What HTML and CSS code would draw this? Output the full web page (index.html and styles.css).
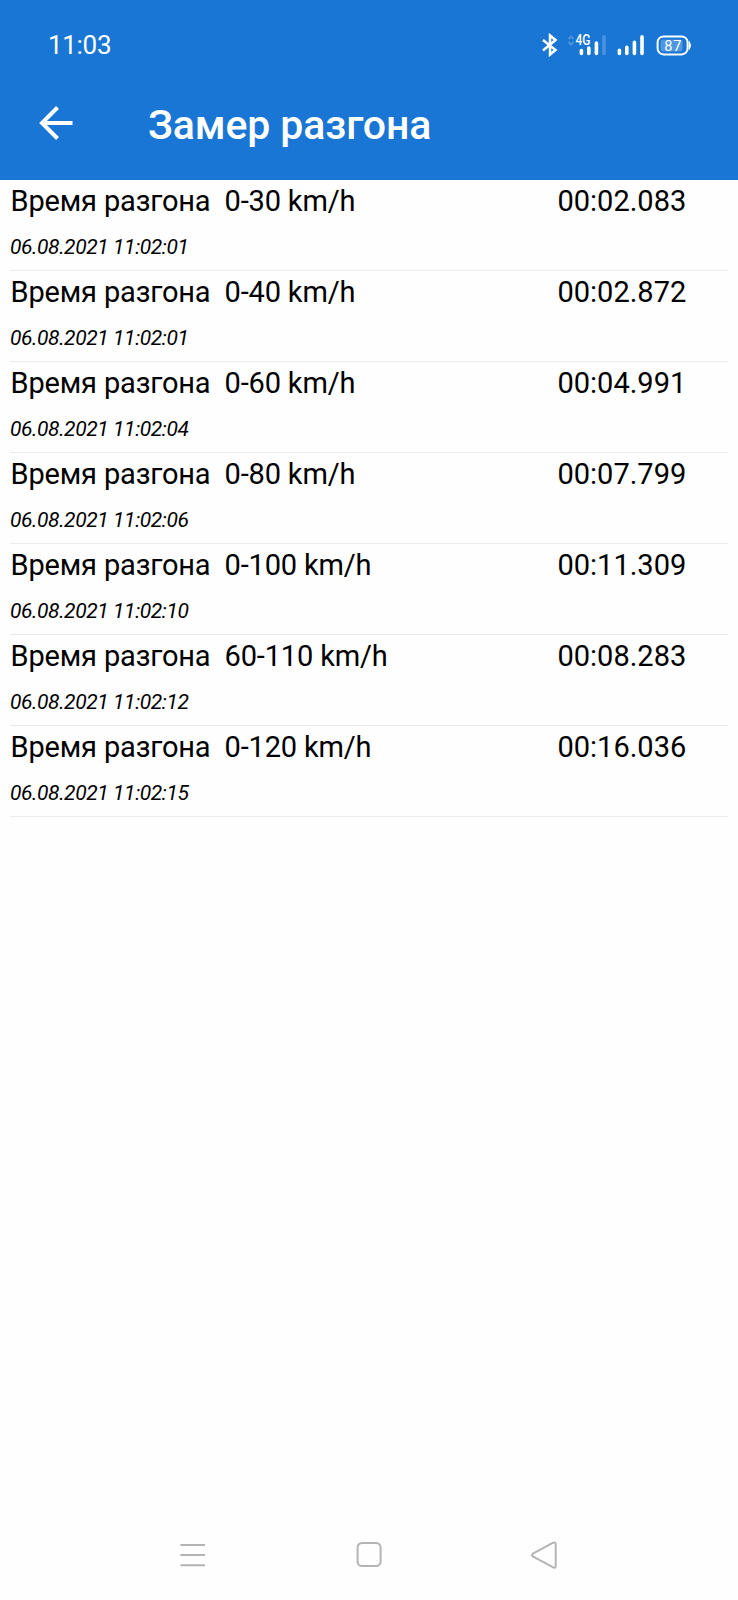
FILE: index.html
```html
<!DOCTYPE html>
<html lang="ru">
  <head>
    <meta charset="UTF-8" />
    <meta name="viewport" content="width=device-width, initial-scale=1.0" />
    <title>Замер разгона</title>
    <link rel="stylesheet" href="styles.css">
  </head>
  <body>
    <header class="header">
      <div class="status">
        <span class="clock">11:03</span>
        <svg class="status-icons" width="160" height="30" viewBox="0 0 160 30">
          <!-- bluetooth -->
          <path d="M3 10 L15.5 20 L10 24.5 V5.5 L15.5 10 L3 20.5" fill="none" stroke="#fff" stroke-width="2.5" />
          <!-- mobile data -->
          <path d="M28.5 9 L31 6.5 L33.5 9 M28.5 12 L31 14.5 L33.5 12" fill="none" stroke="#4a92dd" stroke-width="2" />
          <text class="net" x="35.5" y="14.5" textLength="15" lengthAdjust="spacingAndGlyphs">4G</text>
          <g stroke="#fff" stroke-width="3.6" stroke-linecap="round">
            <path d="M41.4 20.6 V23.4 M48.8 18 V23.4 M56.4 13 V23.4" />
            <path d="M64 6.8 V23.4" stroke="#4a92dd" />
            <path d="M79.4 20.4 V23.4 M86.8 17.4 V23.4 M94.4 12.4 V23.4 M102 6.8 V23.4" />
          </g>
          <!-- battery -->
          <rect x="120.5" y="9.5" width="22" height="12" rx="3" fill="#4f97e0" />
          <rect x="117.6" y="6.4" width="30" height="18" rx="6" fill="none" stroke="#fff" stroke-width="2" />
          <path d="M149.2 11.5 Q152 15.3 149.2 19.5 Z" fill="#fff" stroke="#fff" />
          <text class="charge" x="124.3" y="20.6" textLength="17">87</text>
        </svg>
      </div>
      <div class="toolbar">
        <svg class="back" width="34" height="34" viewBox="0 0 34 34">
          <path d="M18.5 1.5 L3 17 L18.5 32.5 M3 17 H33.5" fill="none" stroke="#fff" stroke-width="4" />
        </svg>
        <h1>Замер разгона</h1>
      </div>
    </header>

    <main class="list">
      <div class="item">
        <p class="name">Время разгона&nbsp; 0-30 km/h</p>
        <p class="time">00:02.083</p>
        <p class="date">06.08.2021 11:02:01</p>
      </div>
      <div class="item">
        <p class="name">Время разгона&nbsp; 0-40 km/h</p>
        <p class="time">00:02.872</p>
        <p class="date">06.08.2021 11:02:01</p>
      </div>
      <div class="item">
        <p class="name">Время разгона&nbsp; 0-60 km/h</p>
        <p class="time">00:04.991</p>
        <p class="date">06.08.2021 11:02:04</p>
      </div>
      <div class="item">
        <p class="name">Время разгона&nbsp; 0-80 km/h</p>
        <p class="time">00:07.799</p>
        <p class="date">06.08.2021 11:02:06</p>
      </div>
      <div class="item">
        <p class="name">Время разгона&nbsp; 0-100 km/h</p>
        <p class="time">00:11.309</p>
        <p class="date">06.08.2021 11:02:10</p>
      </div>
      <div class="item">
        <p class="name">Время разгона&nbsp; 60-110 km/h</p>
        <p class="time">00:08.283</p>
        <p class="date">06.08.2021 11:02:12</p>
      </div>
      <div class="item">
        <p class="name">Время разгона&nbsp; 0-120 km/h</p>
        <p class="time">00:16.036</p>
        <p class="date">06.08.2021 11:02:15</p>
      </div>
    </main>

    <nav class="navbar">
      <svg width="26" height="28" viewBox="0 0 26 28">
        <path d="M0.5 4 H25 M0.5 14 H25 M0.5 24.3 H25" />
      </svg>
      <svg width="26" height="28" viewBox="0 0 26 28">
        <rect x="1.6" y="2" width="23" height="23" rx="4.5" />
      </svg>
      <svg width="26" height="28" viewBox="0 0 26 28">
        <path d="M1.8 12.7 L22.2 1.7 Q24.7 0.8 24.7 3.2 V25 Q24.7 27.4 22.2 26.4 L1.8 15.4 Q0.2 14 1.8 12.7 Z" />
      </svg>
    </nav>
  </body>
</html>
```
FILE: styles.css
```css
* {
  margin: 0;
  padding: 0;
  box-sizing: border-box;
}
body {
  font-family: Roboto, sans-serif;
  background: #fefefe;
  color: #000;
  min-height: 1600px;
  display: flex;
  flex-direction: column;
}
.header {
  height: 180.4px;
  background: #1976d4;
  color: #fff;
}
.status {
  height: 90px;
  padding: 0 38px 0 48px;
  display: flex;
  align-items: center;
  justify-content: space-between;
}
.clock {
  font-size: 26px;
  letter-spacing: -0.3px;
}
.net {
  font-size: 14px;
  font-weight: 500;
  fill: #fff;
}
.charge {
  font-size: 14.5px;
  fill: #fff;
}
.toolbar {
  height: 68px;
  padding-left: 39px;
  display: flex;
  align-items: center;
}
.toolbar h1 {
  margin-left: 75px;
  padding-top: 2px;
  font-size: 41px;
  font-weight: 500;
  letter-spacing: -0.1px;
}
.back {
  margin-bottom: 3px;
}
.list {
  flex: 1;
  padding: 0 10px;
}
.item {
  height: 91px;
  display: grid;
  grid-template-columns: 547.5px 1fr;
  grid-template-rows: 44px 46px;
  border-bottom: 1px solid #ececec;
}
.name,
.time {
  font-size: 29px;
  line-height: 42px;
}
.name {
  padding-left: 0.5px;
  letter-spacing: -0.16px;
}
.date {
  font-size: 21px;
  font-style: italic;
  letter-spacing: -0.4px;
  line-height: 46px;
}
.navbar {
  height: 90px;
  padding: 0 181px 0 180px;
  display: flex;
  align-items: center;
  justify-content: space-between;
}
.navbar svg {
  fill: none;
  stroke: #b4b4b4;
  stroke-width: 2;
}
```
